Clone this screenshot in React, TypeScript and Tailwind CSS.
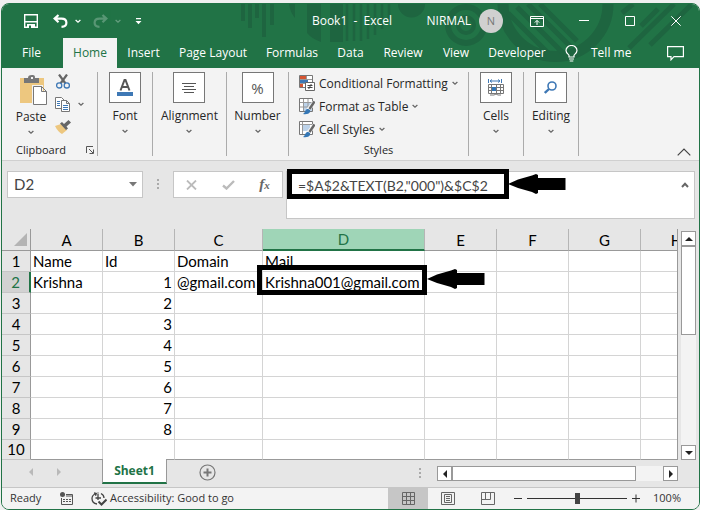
import React, { useState } from 'react';

const FONT_UI = "font-['Open_Sans',sans-serif]";
const FONT_CELL = "font-['Lato',sans-serif]";

const menuTabs = [
  { name: 'File', width: 'w-[61px] pr-[2px]' },
  { name: 'Home', width: 'w-[54px]' },
  { name: 'Insert', width: 'w-[53px]' },
  { name: 'Page Layout', width: 'w-[86px]' },
  { name: 'Formulas', width: 'w-[72px]' },
  { name: 'Data', width: 'w-[45px]' },
  { name: 'Review', width: 'w-[60px]' },
  { name: 'View', width: 'w-[46px]' },
  { name: 'Developer', width: 'w-[76px]' },
];

const columns = [
  { name: 'A', width: 'w-[72px]' },
  { name: 'B', width: 'w-[72px]' },
  { name: 'C', width: 'w-[88px]' },
  { name: 'D', width: 'w-[162px]' },
  { name: 'E', width: 'w-[72px]' },
  { name: 'F', width: 'w-[72px]' },
  { name: 'G', width: 'w-[72px]' },
  { name: 'H', width: 'w-[72px]' },
];

const rows: string[][] = [
  ['Name', 'Id', 'Domain', 'Mail'],
  ['Krishna', '1', '@gmail.com', 'Krishna001@gmail.com'],
  ['', '2'],
  ['', '3'],
  ['', '4'],
  ['', '5'],
  ['', '6'],
  ['', '7'],
  ['', '8'],
  [],
];

const Chevron: React.FC<{ color?: string }> = ({ color = '#666' }) => (
  <svg width="6" height="5" viewBox="0 0 6 5" fill="none" stroke={color} strokeWidth="1.3">
    <path d="M.6 1L3 3.2L5.4 1" />
  </svg>
);

const Arrow: React.FC<{ className: string }> = ({ className }) => (
  <svg className={className} width="58" height="22" viewBox="0 0 58 22" fill="#000">
    <path d="M0 11L10 6.5L24 2.5L28 1L30 2V5H57.5V17H30V20L28 21L24 19L10 15Z" />
  </svg>
);

/* Faint circuit style artwork behind the title bar */
const TitleArt = () => (
  <svg className="absolute top-0 left-0" width="698" height="65" viewBox="2 3 698 65" fill="none" stroke="#1e6540">
    <path strokeWidth="4" d="M243 3V20M250 3V27M257 3V17M264 3V36M272 3V24" />
    <path fill="#1e6540" stroke="none" d="M289 3H295V17Q290 11 289 3ZM307 3H321V41Q312 38 307 32ZM330 3H343V41H330ZM398 3H425A13.5 13.5 0 0 1 398 3Z" />
    <path strokeWidth="2.5" d="M347 3V40M354 3V40M361 3V40M368 3V38M375 3V34M382 3V28M389 3V20" />
    <circle cx="466" cy="24" r="18" strokeWidth="6" />
    <circle cx="466" cy="24" r="8" strokeWidth="4" />
    <path strokeWidth="11" d="M608 3A52 52 0 0 1 503 3" />
    <path strokeWidth="5" d="M508 12L548 52M517 6L562 51M528 3L571 46M540 3L577 40" />
    <path strokeWidth="5" d="M622 12L633 3M629 47L674 3M650 44L691 4M641 25L658 8" />
  </svg>
);

const TitleBar = () => (
  <div className="relative flex h-[34px] items-center text-white">
    <div className="flex w-[302px] items-center pl-[22px]">
      <button aria-label="Save">
        <svg width="14" height="14" viewBox="0 0 14 14" fill="none" stroke="#fff" strokeWidth="1.4">
          <path d="M.7.7H13.3V13.3H.7ZM1 7.7H13" />
          <path fill="#fff" stroke="none" d="M3 10H11V14H3Z" />
          <path stroke="#217346" strokeWidth="2" d="M6 11.5V14" />
        </svg>
      </button>
      <button aria-label="Undo" className="ml-[15px]">
        <svg width="15" height="14" viewBox="0 0 15 14" fill="none" stroke="#fff" strokeWidth="2.2">
          <path d="M5.5 1L1.6 4.6L5.5 8.2M2 4.6H8.5C11.8 4.6 13.4 6.5 13.4 8.7C13.4 11.2 11.6 12.6 8.5 12.8" />
        </svg>
      </button>
      <span className="ml-[7px]"><Chevron color="#fff" /></span>
      <button aria-label="Redo" className="ml-3 opacity-25">
        <svg width="15" height="14" viewBox="0 0 15 14" fill="none" stroke="#fff" strokeWidth="2.2">
          <path d="M9.5 1L13.4 4.6L9.5 8.2M13 4.6H6.5C3.2 4.6 1.6 6.5 1.6 8.7C1.6 11.2 3.4 12.6 6.5 12.8" />
        </svg>
      </button>
      <span className="ml-[7px] opacity-30"><Chevron color="#fff" /></span>
      <button aria-label="Customize Quick Access Toolbar" className="ml-[14px]">
        <svg width="7" height="7" viewBox="0 0 7 7" fill="#fff">
          <path d="M1 0H6V1.3H1ZM.5 3H6.5L3.5 6.3Z" />
        </svg>
      </button>
    </div>
    <div className="w-[96px] text-center whitespace-pre">Book1  -  Excel</div>
    <div className="ml-auto flex items-center">
      <span>NIRMAL</span>
      <button className="ml-2 h-6 w-6 rounded-full bg-[#d0d0d0] text-[11px] text-[#777]">N</button>
      <button aria-label="Ribbon Display Options" className="ml-[27px]">
        <svg width="14" height="11" viewBox="0 0 14 11" fill="none" stroke="#fff">
          <path d="M.5.5H13.5V10.5H.5ZM.5 2.5H13.5M7 9V4.5M4.8 6.6L7 4.4L9.2 6.6" />
        </svg>
      </button>
      <button aria-label="Minimize" className="ml-[35px]">
        <svg width="10" height="10" viewBox="0 0 10 10" stroke="#fff"><path d="M0 4.5H10" /></svg>
      </button>
      <button aria-label="Maximize" className="ml-9">
        <svg width="10" height="10" viewBox="0 0 10 10" fill="none" stroke="#fff"><path d="M.5.5H9.5V9.5H.5Z" /></svg>
      </button>
      <button aria-label="Close" className="mr-[18px] ml-9">
        <svg width="10" height="10" viewBox="0 0 10 10" stroke="#fff"><path d="M.3.3L9.7 9.7M9.7.3L.3 9.7" /></svg>
      </button>
    </div>
  </div>
);

const MenuBar: React.FC<{ active: string; onSelect: (name: string) => void }> = ({ active, onSelect }) => (
  <nav className="relative flex h-[30px] items-stretch text-white">
    {menuTabs.map((tab) => (
      <button
        key={tab.name}
        onClick={() => onSelect(tab.name)}
        className={`${tab.width} shrink-0 whitespace-nowrap ${active === tab.name ? 'bg-[#f3f3f3] text-[#217346]' : ''}`}
      >
        {tab.name}
      </button>
    ))}
    <button className="flex items-center gap-[13px] pl-[10px] whitespace-nowrap">
      <svg width="13" height="17" viewBox="0 0 13 17" fill="none" stroke="#fff" strokeWidth="1.2">
        <path d="M4 12V10.5C4 9.3 1 8.5 1 5.6A5.4 5 0 0 1 12 5.6C12 8.5 9 9.3 9 10.5V12ZM4 14H9M4.7 16H8.3" />
      </svg>
      Tell me
    </button>
    <button aria-label="Comments" className="mr-[15px] ml-auto">
      <svg width="17" height="15" viewBox="0 0 17 15" fill="none" stroke="#fff" strokeWidth="1.2">
        <path d="M.6.6H16.4V10.6H7L4 13.8V10.6H.6Z" />
      </svg>
    </button>
  </nav>
);

const RibbonGroup: React.FC<{ label: string; width: string; children: React.ReactNode }> = ({ label, width, children }) => (
  <div className={`${width} mt-1 flex h-[84px] shrink-0 justify-center border-r border-[#ababab]`}>
    <button className="flex flex-col items-center">
      <span className="flex h-[31px] w-8 items-center justify-center border border-[#777] bg-white">{children}</span>
      <span className="mt-1 leading-[18px]">{label}</span>
      <span className="mt-1"><Chevron /></span>
    </button>
  </div>
);

const StyleIcon: React.FC<{ kind: string }> = ({ kind }) => (
  <svg width="16" height="17" viewBox="0 0 16 17" fill="none">
    {kind === 'conditional' && (
      <>
        <path fill="#fff" stroke="#777" d="M.5.5H13.5V12.5H.5Z" />
        <path stroke="#999" d="M7.5 1V12M1 4.5H13M1 8.5H13" />
        <path fill="#d65532" d="M1 1H7V4H1ZM1 9H4V12H1Z" />
        <path fill="#3e78b5" d="M1 5H9V8H1Z" />
        <path fill="#fff" stroke="#666" d="M6.5 7.5H15.5V15.5H6.5Z" />
        <path stroke="#444" d="M8.5 10.5H13.5M8.5 12.5H13.5M12.3 9L9.7 14" />
      </>
    )}
    {kind !== 'conditional' && (
      <>
        <path fill="#fff" stroke="#777" d="M.5.5H13.5V13.5H.5Z" />
        <path fill="#bdd3ea" d={kind === 'table' ? 'M5 5H13V13H5Z' : 'M4 4H11V10H4Z'} />
        <path stroke="#999" d={kind === 'table' ? 'M4.5 1V13M9 1V13M1 4.5H13M1 9H13' : 'M3.5 1V13M1 3.5H13'} />
        <path stroke="#f3f3f3" strokeWidth="4" d="M15.5 4L9 12" />
        <path stroke="#666" strokeWidth="2.4" d="M15.5 3.5L10.5 11" />
        <path fill="#3577b5" d="M4 16C6 15 6 12 8 11C10 10.5 12 12 11 14C10 16 7 16.5 4 16Z" />
      </>
    )}
  </svg>
);

const Ribbon = () => (
  <div className="flex h-[93px] border-b border-[#d0d0d0] bg-[#f3f3f3] text-[#262626]">
    <div className="mt-1 flex h-[84px] w-[96px] shrink-0 flex-col border-r border-[#ababab]">
      <div className="flex">
        <button className="ml-[11px] flex w-9 flex-col items-center pt-[2px]">
          <svg className="ml-1" width="30" height="32" viewBox="0 0 30 32" fill="none">
            <path fill="#edc77f" d="M2 4H26V29H2Z" />
            <path fill="#777" d="M6 4H10C10 2 11 1 14 1S17 2 17 4H21V9H6Z" />
            <path fill="#f3f3f3" d="M13 3H15V5H13ZM14 11H25V32H14Z" />
            <path fill="#fff" stroke="#777" d="M15.5 12.5H23.5L28.5 17.5V30.5H15.5ZM23.5 12.5V17.5H28.5" />
          </svg>
          <span className="mt-[3px] leading-4 whitespace-nowrap">Paste</span>
          <span className="mt-[5px]"><Chevron /></span>
        </button>
        <div className="ml-[6px] flex flex-col items-start gap-2 pt-[2px]">
          <button aria-label="Cut">
            <svg width="16" height="15" viewBox="0 0 16 15" fill="none">
              <path stroke="#666" strokeWidth="2.2" d="M4 .5L10.5 9.5M12 .5L5.5 9.5" />
              <circle cx="4.2" cy="11.4" r="2.6" fill="#f3f3f3" stroke="#3e78b5" strokeWidth="1.3" />
              <circle cx="11.8" cy="11.4" r="2.6" fill="#f3f3f3" stroke="#3e78b5" strokeWidth="1.3" />
            </svg>
          </button>
          <button aria-label="Copy" className="flex items-center gap-2">
            <svg width="15" height="15" viewBox="0 0 15 15" fill="#fff" stroke="#777">
              <path d="M.5.5H6.5L9.5 3.5V11.5H.5Z" />
              <path stroke="#3e78b5" d="M2 4.5H5M2 6.5H5M2 8.5H5" />
              <path d="M6.5 3.5H11.5L14.5 6.5V14.5H6.5ZM11.5 3.5V6.5H14.5" />
              <path stroke="#3e78b5" d="M8 8.5H13M8 10.5H13M8 12.5H13" />
            </svg>
            <Chevron />
          </button>
          <button aria-label="Format Painter">
            <svg width="16" height="14" viewBox="0 0 16 14">
              <path fill="#edc77f" d="M0 6L6 4L12 10L7 14Q3 12 0 6Z" />
              <path fill="#666" d="M5 3.5L7 2L9 4L13.5 0L16 2.5L11.5 6.5L13 8.5L11 10Z" />
            </svg>
          </button>
        </div>
      </div>
      <div className="mt-auto flex items-center pl-[14px] text-[11px] leading-3">
        Clipboard
        <button aria-label="Clipboard settings" className="mr-[3px] ml-auto">
          <svg width="8" height="8" viewBox="0 0 8 8" fill="none" stroke="#555">
            <path d="M.5 7V.5H7M3 3L7 7M7.5 3.5V7.5H3.5" />
          </svg>
        </button>
      </div>
    </div>
    <RibbonGroup label="Font" width="w-[55px]">
      <svg width="18" height="18" viewBox="0 0 18 18" fill="none">
        <path stroke="#555" strokeWidth="2" d="M4.5 11.5L8.5 1H9.5L13.5 11.5M6 8H12" />
        <path fill="#3e78b5" d="M1 13H17V17H1Z" />
      </svg>
    </RibbonGroup>
    <RibbonGroup label="Alignment" width="w-[74px]">
      <svg width="14" height="10" viewBox="0 0 14 10" stroke="#555">
        <path d="M0 .5H14M2 3.5H12M0 6.5H14M2 9.5H12" />
      </svg>
    </RibbonGroup>
    <RibbonGroup label="Number" width="w-[62px]">
      <span className="text-[15px] text-[#555]">%</span>
    </RibbonGroup>
    <div className="mt-1 flex h-[84px] w-[180px] shrink-0 flex-col border-r border-[#ababab] pl-[10px]">
      {[
        ['Conditional Formatting', 'conditional'],
        ['Format as Table', 'table'],
        ['Cell Styles', 'cell'],
      ].map(([label, kind]) => (
        <button key={kind} className="flex h-[23px] items-center gap-1 whitespace-nowrap">
          <StyleIcon kind={kind} />
          {label}
          <Chevron />
        </button>
      ))}
      <div className="mt-auto pr-[10px] text-center text-[11px] leading-3">Styles</div>
    </div>
    <RibbonGroup label="Cells" width="w-[55px]">
      <svg width="16" height="17" viewBox="0 0 16 17" fill="none" stroke="#777">
        <path stroke="#3e78b5" d="M.5 0V4M13.5 0V4M2 2H12M4 .5L2 2L4 3.5M10 .5L12 2L10 3.5" />
        <path d="M.5 5.5H15.5V14.5H.5ZM3.5 5V15M8.5 5V15M12.5 5V15M0 8.5H16M0 11.5H16M2 16H6L8 15L10 16H13" />
        <path fill="#3577b5" stroke="none" d="M4 8H8V12H4Z" />
      </svg>
    </RibbonGroup>
    <RibbonGroup label="Editing" width="w-[55px]">
      <svg width="13" height="13" viewBox="0 0 13 13" fill="none" stroke="#3e78b5">
        <circle cx="8" cy="5" r="4" strokeWidth="1.6" />
        <path strokeWidth="2.4" d="M5 8L.8 12" />
      </svg>
    </RibbonGroup>
    <button aria-label="Collapse the Ribbon" className="mt-auto mr-2 mb-1 ml-auto">
      <svg width="14" height="8" viewBox="0 0 14 8" fill="none" stroke="#444" strokeWidth="1.2">
        <path d="M.7 7.3L7 1L13.3 7.3" />
      </svg>
    </button>
  </div>
);

const Dots = () => (
  <span className="flex flex-col gap-[2px]">
    <i className="h-[2px] w-[2px] bg-[#aaa]" />
    <i className="h-[2px] w-[2px] bg-[#aaa]" />
    <i className="h-[2px] w-[2px] bg-[#aaa]" />
  </span>
);

const FormulaBar = () => {
  const [formula, setFormula] = useState('=$A$2&TEXT(B2,"000")&$C$2');

  return (
    <div className={`${FONT_CELL} flex h-[68px] items-start pt-[10px] pr-1 pl-[5px] text-[15px] text-[#444]`}>
      <div className="relative h-[27px] w-[136px] shrink-0">
        <select aria-label="Name Box" className="h-full w-full appearance-none border border-[#c6c6c6] bg-white pl-[6px]">
          <option>D2</option>
        </select>
        <svg className="pointer-events-none absolute top-[11px] right-[6px]" width="8" height="5" viewBox="0 0 8 5" fill="#777">
          <path d="M0 0H8L4 4.5Z" />
        </svg>
      </div>
      <span className="mt-2 ml-[14px]"><Dots /></span>
      <div className="ml-[14px] flex h-[27px] w-[110px] shrink-0 items-center justify-around border border-[#c6c6c6] bg-white">
        <button aria-label="Cancel">
          <svg width="11" height="10" viewBox="0 0 11 10" stroke="#bbb" strokeWidth="1.8"><path d="M1 .5L10 9.5M10 .5L1 9.5" /></svg>
        </button>
        <button aria-label="Enter">
          <svg width="13" height="10" viewBox="0 0 13 10" fill="none" stroke="#bbb" strokeWidth="2.4"><path d="M1 5.5L4.5 8.5L12 1" /></svg>
        </button>
        <button className="font-['Liberation_Serif',serif] text-[15px] leading-4 font-bold text-[#666] italic">
          f<span className="text-[11px]">x</span>
        </button>
      </div>
      <div className="relative ml-[3px] flex h-[48px] flex-1 items-start border border-[#c6c6c6] bg-white">
        <input
          aria-label="Formula Bar"
          value={formula}
          onChange={(e) => setFormula(e.target.value)}
          className="h-[26px] min-w-0 flex-1 pl-[11px] text-sm outline-none"
        />
        <button aria-label="Collapse Formula Bar" className="mt-[10px] mr-[5px]">
          <svg width="8" height="6" viewBox="0 0 8 6" fill="none" stroke="#666" strokeWidth="2"><path d="M1 5L4 1.8L7 5" /></svg>
        </button>
        <span className="pointer-events-none absolute -top-[3px] left-0 h-[30px] w-[222px] border-5 border-black" />
        <Arrow className="pointer-events-none absolute top-[1px] left-[221px]" />
      </div>
    </div>
  );
};

const ScrollButton: React.FC<{ label: string; d: string }> = ({ label, d }) => (
  <button aria-label={label} className="flex h-[15px] w-[15px] shrink-0 items-center justify-center border border-[#999] bg-white">
    <svg width="8" height="8" viewBox="0 0 8 8" fill="#222"><path d={d} /></svg>
  </button>
);

const Sheet = () => (
  <div className={`${FONT_CELL} relative flex text-[15px] leading-5 text-black`}>
    <div className="min-w-0 flex-1 overflow-hidden border-r border-[#999] bg-[#e6e6e6]">
      <table className="w-[711px] table-fixed border-separate border-spacing-0">
        <thead>
          <tr className="h-[21px]">
            <th className="w-[29px] border-r border-b border-[#999] p-0">
              <svg className="ml-3" width="13" height="13" viewBox="0 0 13 13" fill="#b4b4b4"><path d="M13 0V13H0Z" /></svg>
            </th>
            {columns.map((col) => (
              <th
                key={col.name}
                className={`${col.width} p-0 font-normal ${
                  col.name === 'D'
                    ? 'border-r border-b-2 border-r-[#b5b5b5] border-b-[#217346] bg-[#9fd5b7] text-[#217346]'
                    : 'border-r border-b border-r-[#b5b5b5] border-b-[#999]'
                }`}
              >
                {col.name}
              </th>
            ))}
          </tr>
        </thead>
        <tbody>
          {rows.map((row, r) => (
            <tr key={r} className={r === rows.length - 1 ? 'h-5' : 'h-[21px]'}>
              <th
                className={`border-b p-0 font-normal ${
                  r === 1
                    ? 'border-r-2 border-r-[#217346] border-b-[#c6c6c6] bg-[#d2d2d2] text-[#217346]'
                    : 'border-r border-r-[#999] border-b-[#c6c6c6]'
                } ${r === rows.length - 1 ? 'leading-[19px]' : ''}`}
              >
                {r + 1}
              </th>
              {columns.map((col, c) => (
                <td
                  key={col.name}
                  className={`overflow-hidden border-r border-b border-r-[#d4d4d4] bg-white py-0 whitespace-nowrap ${
                    r === rows.length - 1 ? 'border-b-[#999]' : 'border-b-[#d4d4d4]'
                  } ${c === 1 && r > 0 ? 'pr-[2px] text-right' : 'pl-[2px]'}`}
                >
                  {row[c]}
                </td>
              ))}
            </tr>
          ))}
        </tbody>
      </table>
    </div>
    <div className="mt-[2px] mr-[3px] ml-[3px] flex w-[15px] flex-col bg-[#f3f3f3]">
      <ScrollButton label="Scroll up" d="M0 6L4 2L8 6Z" />
      <div className="h-[89px] border border-[#999] bg-white" />
      <div className="flex-1" />
      <ScrollButton label="Scroll down" d="M0 2L4 6L8 2Z" />
    </div>
    <span className="pointer-events-none absolute top-9 left-[255px] h-[30px] w-[170px] border-5 border-black" />
    <Arrow className="pointer-events-none absolute top-[39px] left-[425px]" />
  </div>
);

const SheetTabs = () => (
  <div className="flex h-7 items-start border-b border-[#c6c6c6]">
    <div className="flex w-[100px] items-center gap-[22px] pt-2 pl-[26px]">
      <button aria-label="Previous sheet">
        <svg width="6" height="8" viewBox="0 0 6 8" fill="#b9b9b9"><path d="M5 0V8L1 4Z" /></svg>
      </button>
      <button aria-label="Next sheet">
        <svg width="6" height="8" viewBox="0 0 6 8" fill="#b9b9b9"><path d="M1 0V8L5 4Z" /></svg>
      </button>
    </div>
    <button className="relative -mt-px h-[25px] w-[65px] border-x border-b-2 border-x-[#999] border-b-[#217346] bg-white font-bold text-[#217346]">
      Sheet1
    </button>
    <button aria-label="New sheet" className="mt-1 ml-8">
      <svg width="17" height="17" viewBox="0 0 17 17" fill="none" stroke="#777">
        <circle cx="8.5" cy="8.5" r="7.5" strokeWidth="1.2" />
        <path strokeWidth="2" d="M8.5 4.5V12.5M4.5 8.5H12.5" />
      </svg>
    </button>
    <span className="mt-2 ml-auto"><Dots /></span>
    <div className="mt-[6px] mr-[21px] ml-4 flex h-[15px] w-[241px] bg-[#f3f3f3]">
      <ScrollButton label="Scroll left" d="M6 0V8L2 4Z" />
      <div className="w-[184px] border border-[#999] bg-white" />
      <div className="flex-1" />
      <ScrollButton label="Scroll right" d="M2 0V8L6 4Z" />
    </div>
  </div>
);

const StatusBar = () => {
  const [zoom, setZoom] = useState(50);

  return (
    <div className="flex h-[21px] items-center bg-[#f3f3f3] text-[11px] text-[#333]">
      <span className="w-[58px] pl-2">Ready</span>
      <button aria-label="Record macro">
        <svg width="13" height="13" viewBox="0 0 13 13" fill="none" stroke="#555">
          <path d="M6 2.5H12.5V12.5H1.5V6M6 4H12.5M3 7.5H5M6 7.5H8M9 7.5H11M3 9.5H5M6 9.5H8M9 9.5H11" />
          <circle cx="2.5" cy="2.5" r="2.5" fill="#555" stroke="none" />
        </svg>
      </button>
      <button className="ml-[18px] flex items-center gap-[3px] whitespace-nowrap">
        <svg width="16" height="14" viewBox="0 0 16 14" fill="none" stroke="#444" strokeWidth="1.3">
          <path d="M5 1.5C2 2.5 1 4.5 1 6.5C1 9.5 3 11.5 6 12M3 .8L5.3 1.4L4.5 3.8M10 1.5C12 2.5 13 4 13 6M7 2V8M4.5 6H10M7 .5V1.5" />
          <path strokeWidth="2" d="M7.5 9.5L10.5 12.5L15.5 7.5" />
        </svg>
        Accessibility: Good to go
      </button>
      <div className="ml-auto flex h-full">
        <button aria-label="Normal view" className="flex w-10 items-center justify-center bg-[#c6c6c6]">
          <svg width="13" height="13" viewBox="0 0 13 13" fill="none" stroke="#666"><path d="M.5.5H12.5V12.5H.5ZM4.5 0V13M8.5 0V13M0 4.5H13M0 8.5H13" /></svg>
        </button>
        <button aria-label="Page layout view" className="flex w-10 items-center justify-center">
          <svg width="14" height="13" viewBox="0 0 14 13" fill="none" stroke="#666"><path d="M.5.5H13.5V12.5H.5ZM3.5 2.5H10.5V10.5H3.5ZM5 4.5H9M5 6.5H9M5 8.5H9" /></svg>
        </button>
        <button aria-label="Page break preview" className="flex w-10 items-center justify-center">
          <svg width="14" height="13" viewBox="0 0 14 13" fill="none" stroke="#666"><path d="M.5.5H13.5V12.5H.5ZM.5 7.5H9.5V.5M4.5.5V7.5" /></svg>
        </button>
      </div>
      <button aria-label="Zoom out" className="ml-[6px]">
        <svg width="8" height="9" viewBox="0 0 8 9" stroke="#333"><path d="M0 4.5H8" /></svg>
      </button>
      <input
        type="range"
        aria-label="Zoom"
        value={zoom}
        onChange={(e) => setZoom(Number(e.target.value))}
        className="mx-[5px] h-px w-[100px] appearance-none bg-[#333] [&::-webkit-slider-thumb]:h-[11px] [&::-webkit-slider-thumb]:w-[5px] [&::-webkit-slider-thumb]:appearance-none [&::-webkit-slider-thumb]:bg-[#444]"
      />
      <button aria-label="Zoom in">
        <svg width="8" height="9" viewBox="0 0 8 9" stroke="#333"><path d="M0 4.5H8M4 .5V8.5" /></svg>
      </button>
      <span className="mr-[18px] w-[41px] text-right">100%</span>
    </div>
  );
};

export default function App() {
  const [tab, setTab] = useState('Home');

  return (
    <div className={`${FONT_UI} bg-white pr-[2px] text-xs`}>
      <div className="bg-[#f0f0f0] pt-[3px] pl-px">
        <div className="overflow-hidden rounded-lg border border-[#217346] bg-[#e6e6e6]">
          <header className="relative overflow-hidden bg-[#217346]">
            <TitleArt />
            <TitleBar />
            <MenuBar active={tab} onSelect={setTab} />
          </header>
          <Ribbon />
          <FormulaBar />
          <Sheet />
          <SheetTabs />
          <StatusBar />
        </div>
      </div>
    </div>
  );
}
